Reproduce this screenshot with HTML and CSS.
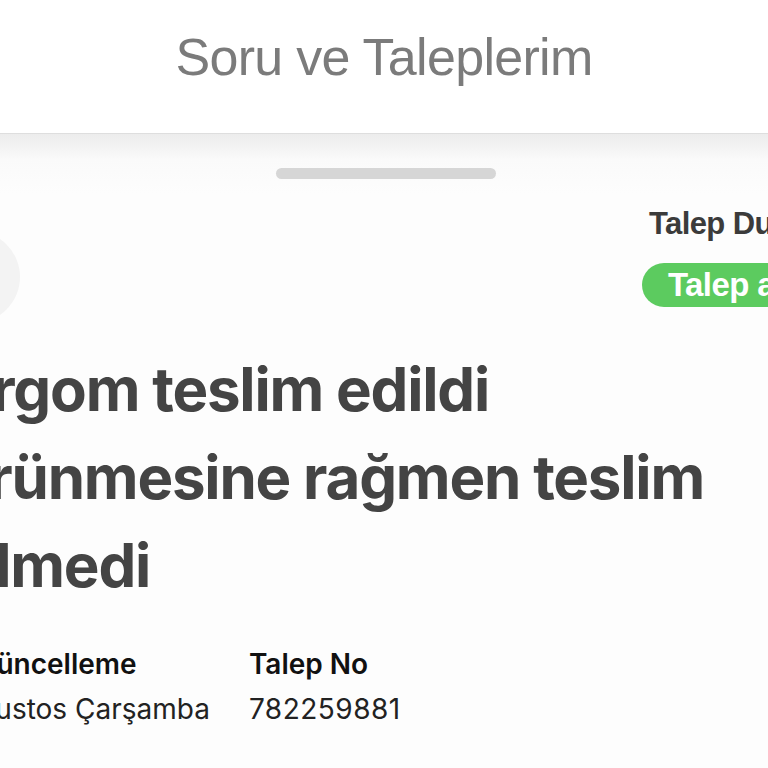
FILE: index.html
```html
<!DOCTYPE html>
<html lang="tr">
<head>
<meta charset="utf-8">
<title>Soru ve Taleplerim</title>
<link rel="stylesheet" href="styles.css">
</head>
<body>
<header class="topbar">
  <h1 class="topbar-title">Soru ve Taleplerim</h1>
</header>
<main class="sheet">
  <div class="handle"></div>
  <div class="content">
    <div class="status-row">
      <div class="avatar"></div>
      <div class="status">
        <div class="status-label">Talep Durumu</div>
        <div class="status-pill">Talep alındı</div>
      </div>
    </div>
    <h2 class="ticket-title">
      <span class="title-line">Kargom teslim edildi</span>
      <span class="title-line">görünmesine rağmen teslim</span>
      <span class="title-line title-line-last">edilmedi</span>
    </h2>
    <div class="info">
      <div class="info-col">
        <div class="info-label">Son Güncelleme</div>
        <div class="info-value">30 Ağustos Çarşamba</div>
      </div>
      <div class="info-col">
        <div class="info-label">Talep No</div>
        <div class="info-value info-number">782259881</div>
      </div>
    </div>
  </div>
</main>
</body>
</html>
```
FILE: styles.css
```css
html, body {
  margin: 0;
  padding: 0;
}
body {
  width: 768px;
  height: 768px;
  overflow: hidden;
  background: #ffffff;
  font-family: Inter, "Noto Sans", sans-serif;
}
.topbar {
  height: 133px;
  display: flex;
  align-items: center;
  justify-content: center;
  background: #ffffff;
  border-bottom: 1px solid #dedede;
}
.topbar-title {
  margin: 0;
  font-family: "Liberation Sans", Arial, sans-serif;
  font-weight: 400;
  font-size: 52px;
  letter-spacing: -0.7px;
  color: #7b7b7b;
  line-height: 52px;
  padding-bottom: 20px;
}
.sheet {
  background: linear-gradient(#ececec 0, #fafafa 26px, #fdfdfd 60px);
  display: flex;
  flex-direction: column;
  align-items: center;
  height: 700px;
}
.handle {
  width: 220px;
  height: 11px;
  border-radius: 6px;
  background: #d6d6d6;
  margin-top: 34px;
  margin-left: 4px;
}
.content {
  align-self: stretch;
  margin-left: -84px;
  display: flex;
  flex-direction: column;
}
.status-row {
  display: flex;
  justify-content: space-between;
  align-items: flex-start;
  margin-top: 29px;
  margin-right: -200px;
}
.avatar {
  width: 92px;
  height: 92px;
  border-radius: 50%;
  background: #f3f3f3;
  margin-top: 23px;
  margin-left: 12px;
}
.status {
  width: 326px;
  display: flex;
  flex-direction: column;
  align-items: flex-start;
}
.status-label {
  font-family: "Liberation Sans", Arial, sans-serif;
  font-weight: 700;
  font-size: 31px;
  line-height: 31px;
  letter-spacing: -0.6px;
  color: #3b3b3b;
  margin-left: 7px;
  white-space: nowrap;
}
.status-pill {
  margin-top: 24px;
  height: 44px;
  border-radius: 22px;
  background: #5ccb5f;
  color: #ffffff;
  font-family: "Liberation Sans", Arial, sans-serif;
  font-weight: 700;
  font-size: 33px;
  line-height: 44px;
  letter-spacing: -0.6px;
  padding: 0 26px;
  white-space: nowrap;
}
.ticket-title {
  margin: 22px 0 0 0;
  font-family: Inter, "Noto Sans", sans-serif;
  font-weight: 700;
  font-size: 60px;
  line-height: 88px;
  letter-spacing: -1.2px;
  color: #444444;
  white-space: nowrap;
}
.title-line {
  display: block;
}
.title-line-last {
  margin-left: -7px;
}
.info {
  display: flex;
  gap: 39px;
  margin-top: 35px;
}
.info-col {
  display: flex;
  flex-direction: column;
  gap: 5px;
}
.info-label {
  font-weight: 600;
  font-size: 28px;
  line-height: 40px;
  color: #111111;
  white-space: nowrap;
}
.info-value {
  font-weight: 400;
  font-size: 28px;
  line-height: 40px;
  color: #222222;
  white-space: nowrap;
}
.info-number {
  letter-spacing: 0.5px;
}
```
